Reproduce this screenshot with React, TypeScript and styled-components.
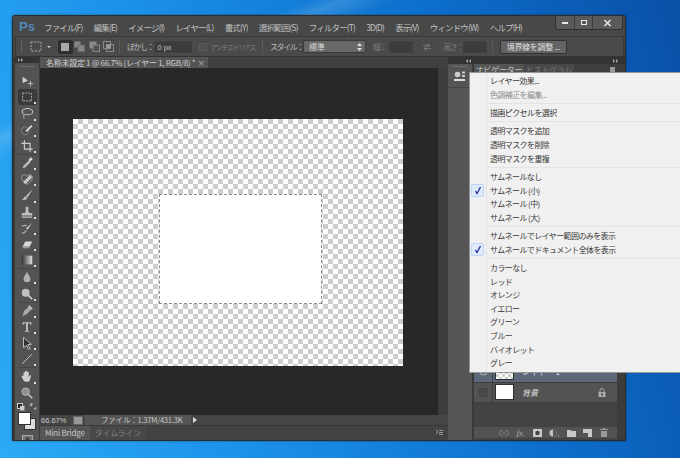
import React from "react";
import styled, { createGlobalStyle } from "styled-components";

const FONT = `"Noto Sans CJK JP", "Liberation Sans", sans-serif`;

const GlobalStyle = createGlobalStyle`
  html, body { margin: 0; padding: 0; height: 100%; overflow: hidden; }
  #root { height: 100%; }
  body { font-family: ${FONT}; }
`;

const MENUS = [
  "ファイル(F)", "編集(E)", "イメージ(I)", "レイヤー(L)", "書式(Y)", "選択範囲(S)",
  "フィルター(T)", "3D(D)", "表示(V)", "ウィンドウ(W)", "ヘルプ(H)",
];

// null は区切り線
const POPUP: ({ label: string; off?: boolean; checked?: boolean } | null)[] = [
  { label: "レイヤー効果..." },
  { label: "色調補正を編集...", off: true },
  null,
  { label: "描画ピクセルを選択" },
  null,
  { label: "透明マスクを追加" },
  { label: "透明マスクを削除" },
  { label: "透明マスクを重複" },
  null,
  { label: "サムネールなし" },
  { label: "サムネール (小)", checked: true },
  { label: "サムネール (中)" },
  { label: "サムネール (大)" },
  null,
  { label: "サムネールでレイヤー範囲のみを表示" },
  { label: "サムネールでドキュメント全体を表示", checked: true },
  null,
  { label: "カラーなし" },
  { label: "レッド" },
  { label: "オレンジ" },
  { label: "イエロー" },
  { label: "グリーン" },
  { label: "ブルー" },
  { label: "バイオレット" },
  { label: "グレー" },
];

const TOOLS: { key: string; active?: boolean; gap?: boolean; plain?: boolean; icon: React.ReactNode }[] = [
  { key: "move", plain: true, icon: <><path d="M3 3l6 4.5-6 3z" fill="#d0d0d0" /><path d="M12 8v6M9 11h6" stroke="#c4c4c4" /></> },
  { key: "marquee", active: true, icon: <rect x="3" y="3.5" width="10" height="9" fill="none" stroke="#ccc" strokeDasharray="2 1.3" /> },
  { key: "lasso", icon: <><ellipse cx="8.5" cy="6.5" rx="6" ry="3.6" fill="none" stroke="#c8c8c8" strokeWidth="1.2" /><path d="M4.5 9.5c-1 2 .5 3.5 0 5" fill="none" stroke="#c8c8c8" /></> },
  { key: "quick", icon: <><circle cx="6" cy="9" r="4.4" fill="none" stroke="#aaa" strokeDasharray="1.5 1" /><path d="M7 9.5L13.5 3" stroke="#ddd" strokeWidth="2" /></> },
  { key: "crop", gap: true, icon: <path d="M5 1.5V11.5H14.5M1.5 5H11.5V14.5" fill="none" stroke="#d0d0d0" strokeWidth="1.3" /> },
  { key: "eyedropper", icon: <><path d="M3 14l1-3 6-6 2 2-6 6z" fill="#bbb" /><path d="M9.5 4.5l3-3 2 2-3 3z" fill="#e0e0e0" /></> },
  { key: "heal", icon: <><path d="M8 14C3 11 1.5 8 2 5.5 2.500 3 6 2 8 5c2-3 5.500-2 6 .5.5 2.500-1 5.500-6 8.500z" fill="none" stroke="#aaa" /><path d="M3.500 11.500l8-8 2.500 2.500-8 8z" fill="#c8c8c8" /></> },
  { key: "brush", icon: <><path d="M14.500 1.500L7 9l1.500 1.500z" fill="#ddd" /><path d="M6.500 9.500c-2 .5-2 3-4.500 4 3 .8 6-.5 6.500-2.500z" fill="#bbb" /></> },
  { key: "stamp", icon: <path d="M6.500 2h3v5l1 2h3.500v3H2V9h3.500l1-2zM2 13h12v1.500H2z" fill="#c0c0c0" /> },
  { key: "history", icon: <><path d="M14 2L7 8.500l1.500 1.500z" fill="#ddd" /><path d="M2 6c3-1.500 5-1.500 6 0M2 14c2 0 4-.5 5-3.500" fill="none" stroke="#aaa" strokeWidth="1.400" /></> },
  { key: "eraser", icon: <><path d="M6 5h8l-3 6H3z" fill="#d8d8d8" /><path d="M3 11h8v2H3z" fill="#999" /></> },
  { key: "gradient", gap: true, icon: <><defs><linearGradient id="gr" x1="0" x2="1"><stop offset="0" stopColor="#333" /><stop offset="1" stopColor="#ddd" /></linearGradient></defs><rect x="2" y="3" width="12" height="10" fill="url(#gr)" /></> },
  { key: "blur", icon: <path d="M8 2c1 3 4 5 4 8a4 4 0 0 1-8 0c0-3 3-5 4-8z" fill="#b0b0b0" /> },
  { key: "dodge", gap: true, icon: <><circle cx="6.500" cy="6.500" r="4.500" fill="#c0c0c0" /><path d="M9.500 9.500l4.500 4.500" stroke="#ccc" strokeWidth="2" /></> },
  { key: "pen", icon: <><path d="M3 14l1.500-6L10 3l3 3-5 5.500z" fill="#aaa" /><path d="M10 2l4 4" stroke="#ddd" strokeWidth="1.500" /></> },
  { key: "type", icon: <path d="M3 2.500h10v3h-1c-.3-1-.6-1.700-2-1.700H9v8c0 .8.500 1 1.500 1v.7h-5v-.7c1 0 1.500-.2 1.500-1v-8H6c-1.400 0-1.700.7-2 1.700H3z" fill="#c4c4c4" /> },
  { key: "path", icon: <path d="M4 1.500l9 8-4 .4 2.500 4.500-2 .8-2-4.500L4 13z" fill="#333" stroke="#ccc" /> },
  { key: "line", gap: true, icon: <path d="M2.500 13.500l11-11" stroke="#c8c8c8" strokeWidth="1.100" /> },
  { key: "hand", icon: <path d="M4 8V4.500c0-1 1.300-1 1.500 0V7V3c0-1 1.500-1 1.500 0v4V2.800c0-1 1.500-1 1.500 0V7V4c0-1 1.500-1 1.500 0v5l1.300-1.500c.8-.8 1.800 0 1.200.9L11 13.500c-.6.9-1.500 1-2.500 1H7C5 14.500 4 13 3 11L1.800 8.500C1.500 7.500 2.700 7 3.200 7.800z" fill="#d0d0d0" /> },
  { key: "zoom", plain: true, icon: <><circle cx="6.500" cy="6.500" r="4.300" fill="#909090" stroke="#bbb" /><path d="M9.800 9.800l4.200 4.200" stroke="#bbb" strokeWidth="2" /></> },
];

export default function App() {
  return (
    <Desktop>
      <GlobalStyle />
      <Window>
        <MenuBar>
          <Logo>Ps</Logo>
          <MenuList>
            {MENUS.map((m) => <MenuItem key={m}>{m}</MenuItem>)}
          </MenuList>
          <Controls>
            <Control $w={18}><MinGlyph /></Control>
            <Control $w={17}><MaxGlyph /></Control>
            <Control $w={29}>
              <svg width="9" height="8" viewBox="0 0 9 8"><path d="M1.500 1l6 6M7.500 1l-6 6" stroke="#e8e8e8" strokeWidth="1.500" /></svg>
            </Control>
          </Controls>
        </MenuBar>

        <OptionsBar>
          <Grip />
          <OptIcon $w={20}>
            <svg width="12" height="11" viewBox="0 0 12 11"><rect x="1" y="1" width="10" height="9" fill="none" stroke="#aaa" strokeDasharray="2 1.300" /></svg>
          </OptIcon>
          <Caret />
          <ModeGroup>
            <ModeButton $on><svg width="8" height="8"><rect width="8" height="8" fill="#a8a8a8" /></svg></ModeButton>
            <ModeButton>
              <svg width="11" height="11"><rect x="0.500" y="0.500" width="6" height="6" fill="#888" /><rect x="4" y="4" width="6.500" height="6.500" fill="#888" stroke="#666" /></svg>
            </ModeButton>
            <ModeButton>
              <svg width="11" height="11"><rect x="0.500" y="0.500" width="7" height="7" fill="#888" /><rect x="4" y="4" width="6.500" height="6.500" fill="#505050" stroke="#888" /></svg>
            </ModeButton>
            <ModeButton>
              <svg width="11" height="11"><rect x="0.500" y="0.500" width="7" height="7" fill="none" stroke="#888" /><rect x="3.500" y="3.500" width="7" height="7" fill="none" stroke="#888" /><rect x="3.500" y="3.500" width="4" height="4" fill="#999" /></svg>
            </ModeButton>
          </ModeGroup>
          <OptSep $l={3} $r={7} />
          <OptLabel>ぼかし：</OptLabel>
          <TextField $w={38} $l={1}>0 px</TextField>
          <CheckBox />
          <OptLabel $dim $narrow>アンチエイリアス</OptLabel>
          <OptSep $l={7} $r={7} />
          <OptLabel>スタイル：</OptLabel>
          <SelectBox>
            標準
            <svg width="5" height="8" viewBox="0 0 5 8"><path d="M2.500 0L5 3H0zM2.500 8L0 5h5z" fill="#ddd" /></svg>
          </SelectBox>
          <OptLabel $dim $l={7}>幅：</OptLabel>
          <TextField $w={24} $l={3} />
          <OptIcon $w={28}>
            <svg width="10" height="10" viewBox="0 0 10 10"><path d="M1 3.500h6M5.500 1.500L8 3.500 5.500 5M9 6.500H3M4.500 4.500L2 6.500l2.500 2" fill="none" stroke="#777" /></svg>
          </OptIcon>
          <OptLabel $dim $l={2}>高さ：</OptLabel>
          <TextField $w={24} />
          <OptSep $l={5} $r={7} />
          <RefineButton>境界線を調整 ...</RefineButton>
        </OptionsBar>

        <Workspace>
          <ToolColumn>
            <ToolHead>
              <svg width="6" height="4" viewBox="0 0 6 4"><path d="M0 0l2 2-2 2zM3 0l2 2-2 2z" fill="#aaa" /></svg>
            </ToolHead>
            <ToolGrip />
            {TOOLS.map((t) => (
              <React.Fragment key={t.key}>
                <ToolButton $active={t.active}>
                  <svg width="14" height="14" viewBox="0 0 16 16">{t.icon}</svg>
                  {!t.plain && <CornerMark />}
                </ToolButton>
                {t.gap && <ToolSep />}
              </React.Fragment>
            ))}
            <SwapRow>
              <svg width="8" height="8"><rect x="0.500" y="0.500" width="5" height="5" fill="#222" stroke="#ccc" /><rect x="3" y="3" width="4.500" height="4.500" fill="#ccc" /></svg>
              <svg width="8" height="8" viewBox="0 0 8 8"><path d="M1 3c0-1.500 1-2 3-2M6 7c1-1 1-2 1-3M3 0L1 1.500 3 3M5 5l2 2" fill="none" stroke="#bbb" /></svg>
            </SwapRow>
            <Swatches>
              <BackSwatch />
              <FrontSwatch />
            </Swatches>
            <MaskButton>
              <svg width="11" height="8"><rect x="0.500" y="0.500" width="10" height="7" fill="#777" stroke="#aaa" /><circle cx="5.500" cy="4" r="2" fill="#444" /></svg>
            </MaskButton>
          </ToolColumn>

          <Center>
            <TabStrip>
              <DocTab>
                名称未設定 1 @ 66.7% (レイヤー 1, RGB/8) *
                <TabClose>×</TabClose>
              </DocTab>
            </TabStrip>
            <CanvasRow>
              <Canvas>
                <Sheet>
                  <Selection />
                </Sheet>
              </Canvas>
              <Scroller />
            </CanvasRow>
            <StatusBar>
              <Zoom>66.67%</Zoom>
              <StatusIcon />
              <FileInfo>ファイル：1.37M/431.3K</FileInfo>
              <StatusArrow />
            </StatusBar>
            <BottomTabs>
              <BottomTab $on>Mini Bridge</BottomTab>
              <BottomTab>タイムライン</BottomTab>
              <BottomMenu>
                <svg width="7" height="5" viewBox="0 0 7 5"><path d="M0 0l2 2-2 2M3 .5h4M3 2.500h4M3 4.500h4" fill="none" stroke="#999" /></svg>
              </BottomMenu>
            </BottomTabs>
          </Center>

          <Dock>
            <DockHead>
              <svg width="6" height="4" viewBox="0 0 6 4"><path d="M3 0L1 2l2 2zM6 0L4 2l2 2z" fill="#aaa" /></svg>
              <svg width="6" height="4" viewBox="0 0 6 4"><path d="M0 0l2 2-2 2zM3 0l2 2-2 2z" fill="#aaa" /></svg>
            </DockHead>
            <DockBody>
              <IconStrip>
                <StripGrip />
                <StripIcon>
                  <svg width="12" height="11" viewBox="0 0 12 11">
                    <circle cx="3.500" cy="3.500" r="2.800" fill="#ccc" />
                    <rect x="8" y="0.500" width="3" height="2" fill="#ccc" />
                    <rect x="8" y="4" width="3" height="2" fill="#ccc" />
                    <rect x="0" y="8" width="11" height="2" fill="#ddd" />
                  </svg>
                </StripIcon>
              </IconStrip>
              <LayersPanel>
                <PanelTabs>
                  <PanelTab $on>ナビゲーター</PanelTab>
                  <PanelTab>ヒストグラム</PanelTab>
                  <PanelMenu />
                </PanelTabs>
                <PanelSpace />
                <LayerRow $selected>
                  <EyeCell>
                    <svg width="9" height="9"><circle cx="4.500" cy="4.500" r="3.500" fill="none" stroke="#bbb" /></svg>
                  </EyeCell>
                  <LayerThumb $checker />
                  <LayerName>レイヤー 1</LayerName>
                </LayerRow>
                <LayerRow>
                  <EyeCell><EyeBox /></EyeCell>
                  <LayerThumb />
                  <LayerName $italic>背景</LayerName>
                  <LockIcon>
                    <svg width="8" height="9" viewBox="0 0 8 9"><path d="M2 4V2.500a2 2 0 0 1 4 0V4" fill="none" stroke="#aaa" /><rect x="0.500" y="4" width="7" height="5" fill="#aaa" /><rect x="3" y="5.500" width="2" height="2" fill="#555" /></svg>
                  </LockIcon>
                </LayerRow>
                <PanelRest />
                <PanelFooter>
                  <svg width="10" height="6" viewBox="0 0 10 6"><path d="M4 .7H2.500a2.300 2.300 0 0 0 0 4.600H4M6 .7h1.500a2.300 2.300 0 0 1 0 4.600H6M3 3h4" fill="none" stroke="#808080" /></svg>
                  <FxLabel>fx.</FxLabel>
                  <svg width="9" height="8"><rect width="9" height="8" fill="#c8c8c8" /><circle cx="4.500" cy="4" r="2.200" fill="#444" /></svg>
                  <svg width="10" height="8" viewBox="0 0 10 8"><circle cx="4" cy="4" r="3.600" fill="#c0c0c0" /><path d="M4 .4a3.600 3.600 0 0 1 0 7.200z" fill="#555" /><rect x="9" y="6.500" width="1" height="1" fill="#ccc" /></svg>
                  <svg width="9" height="8"><path d="M0 1h3.500l1 1H9v6H0z" fill="#c8c8c8" /></svg>
                  <svg width="9" height="8"><path d="M0 0h9v8H5V4H0z" fill="#c8c8c8" /></svg>
                  <svg width="8" height="9"><path d="M0 1h8v1H0zM1 3h6v6H1zM3 0h2v1H3z" fill="#999" /></svg>
                </PanelFooter>
              </LayersPanel>
              <PanelScroll />
            </DockBody>
          </Dock>
        </Workspace>
      </Window>

      <Popup>
        {POPUP.map((item, i) =>
          item === null ? (
            <PopupSep key={i} />
          ) : (
            <PopupItem key={i} $off={item.off}>
              {item.checked && (
                <CheckMark>
                  <svg width="8" height="9" viewBox="0 0 8 9"><path d="M1.500 5l1.500 2.500L6.500 1" fill="none" stroke="#1c2b9c" strokeWidth="1.300" /></svg>
                </CheckMark>
              )}
              {item.label}
            </PopupItem>
          )
        )}
      </Popup>
    </Desktop>
  );
}

const Desktop = styled.div`
  position: relative;
  width: 680px;
  height: 458px;
  overflow: hidden;
  background:
    linear-gradient(158deg, transparent 0 17%, rgba(255, 255, 255, 0.14) 19%, transparent 22%),
    linear-gradient(75deg, #2baaf5 0%, #1b90e8 32%, #0c6dca 70%, #0a4fa6 100%);
`;

const Window = styled.div`
  position: absolute;
  left: 12px;
  top: 15px;
  width: 614px;
  height: 426px;
  box-sizing: border-box;
  display: flex;
  flex-direction: column;
  background: #434343;
  border: 1px solid #2b2b2b;
  border-radius: 3px 3px 0 0;
  box-shadow: 0 0 2px rgba(0, 0, 0, 0.5);
`;

const MenuBar = styled.div`
  position: relative;
  height: 20px;
  display: flex;
  align-items: center;
  padding-left: 6px;
  background: #484848;
`;

const Logo = styled.div`
  width: 25px;
  font: bold 13px "Liberation Sans", sans-serif;
  color: #5288bd;
`;

const MenuList = styled.div`
  display: flex;
  gap: 11.1px;
  margin-top: 1px;
`;

const MenuItem = styled.span`
  font-size: 8.5px;
  letter-spacing: -0.85px;
  color: #c0c0c0;
  white-space: nowrap;
`;

const Controls = styled.div`
  position: absolute;
  right: 2px;
  top: 0;
  height: 13px;
  display: flex;
  border: 1px solid #2e2e2e;
  border-top: none;
  border-radius: 0 0 3px 3px;
  background: #5a5a5a;
`;

const Control = styled.div<{ $w: number }>`
  width: ${(p) => p.$w}px;
  display: flex;
  align-items: center;
  justify-content: center;
  border-right: 1px solid #3c3c3c;
  &:last-child { border-right: none; }
`;

const MinGlyph = styled.div`
  width: 6px;
  height: 2px;
  background: #e8e8e8;
`;

const MaxGlyph = styled.div`
  width: 4px;
  height: 3px;
  border: 1.5px solid #e8e8e8;
`;

const OptionsBar = styled.div`
  height: 21px;
  margin: 0 1px 0 2px;
  box-sizing: border-box;
  display: flex;
  align-items: center;
  padding-left: 5px;
  background: #4a4a4a;
  border: 1px solid #3a3a3a;
  border-bottom-color: #333;
`;

const Grip = styled.div`
  width: 1px;
  height: 12px;
  background: #666;
  margin-right: 4px;
`;

const OptIcon = styled.div<{ $w: number }>`
  width: ${(p) => p.$w}px;
  display: flex;
  justify-content: center;
  flex: none;
`;

const Caret = styled.div`
  width: 0;
  height: 0;
  margin: 0 7px 0 1px;
  border-left: 2px solid transparent;
  border-right: 2px solid transparent;
  border-top: 2.5px solid #ccc;
`;

const ModeGroup = styled.div`
  display: flex;
`;

const ModeButton = styled.div<{ $on?: boolean }>`
  width: 14.500px;
  height: 14px;
  display: flex;
  align-items: center;
  justify-content: center;
  border-radius: 2px;
  background: ${(p) => (p.$on ? "#2e2e2e" : "transparent")};
`;

const OptSep = styled.div<{ $l: number; $r: number }>`
  width: 1px;
  height: 14px;
  background: #5a5a5a;
  margin: 0 ${(p) => p.$r}px 0 ${(p) => p.$l}px;
  flex: none;
`;

const OptLabel = styled.span<{ $dim?: boolean; $l?: number; $narrow?: boolean }>`
  font-size: ${(p) => (p.$narrow ? 7 : 8)}px;
  letter-spacing: -1.4px;
  margin-left: ${(p) => p.$l ?? 0}px;
  color: ${(p) => (p.$dim ? "#7e7e7e" : "#bcbcbc")};
  white-space: nowrap;
`;

const TextField = styled.div<{ $w: number; $l?: number }>`
  width: ${(p) => p.$w}px;
  height: 12px;
  margin-left: ${(p) => p.$l ?? 0}px;
  box-sizing: border-box;
  padding-left: 2px;
  font: 7.5px/11px "Liberation Sans", sans-serif;
  color: #c0c0c0;
  background: #3c3c3c;
  border: 1px solid #404040;
  flex: none;
`;

const CheckBox = styled.div`
  width: 8px;
  height: 8px;
  box-sizing: border-box;
  margin: 0 3px 0 7px;
  background: #505050;
  border: 1px solid #5e5e5e;
  flex: none;
`;

const SelectBox = styled.div`
  width: 63px;
  height: 13px;
  box-sizing: border-box;
  padding: 0 3px 0 5px;
  display: flex;
  align-items: center;
  justify-content: space-between;
  font-size: 8px;
  color: #d8d8d8;
  background: #686868;
  border: 1px solid #3a3a3a;
  border-radius: 2px;
  flex: none;
`;

const RefineButton = styled.div`
  width: 65px;
  height: 12px;
  font-size: 8px;
  letter-spacing: -0.3px;
  line-height: 11px;
  text-align: center;
  color: #e0e0e0;
  background: #646464;
  border: 1px solid #333;
  border-radius: 2px;
  flex: none;
`;

const Workspace = styled.div`
  flex: 1;
  min-height: 0;
  display: flex;
  background: #3a3a3a;
`;

const ToolColumn = styled.div`
  width: 24px;
  margin-left: 2px;
  flex: none;
  display: flex;
  flex-direction: column;
  align-items: center;
  background: #535353;
  overflow: hidden;
`;

const ToolHead = styled.div`
  width: 100%;
  height: 6px;
  display: flex;
  align-items: center;
  padding-left: 3px;
  box-sizing: border-box;
  flex: none;
  background: #333;
`;

const ToolGrip = styled.div`
  width: 13px;
  height: 1px;
  margin: 3px 0 6px;
  flex: none;
  background: #6e6e6e;
`;

const ToolButton = styled.div<{ $active?: boolean }>`
  position: relative;
  width: 19px;
  height: 16.200px;
  flex: none;
  display: flex;
  align-items: center;
  justify-content: center;
  border-radius: 2px;
  background: ${(p) => (p.$active ? "#3a3a3a" : "transparent")};
`;

const CornerMark = styled.i`
  position: absolute;
  right: 1px;
  bottom: 1px;
  width: 2px;
  height: 2px;
  background: #ddd;
`;

const ToolSep = styled.div`
  width: 19px;
  height: 1px;
  flex: none;
  background: #454545;
`;

const SwapRow = styled.div`
  width: 20px;
  height: 9px;
  margin-top: 2px;
  flex: none;
  display: flex;
  justify-content: space-between;
`;

const Swatches = styled.div`
  position: relative;
  width: 18px;
  height: 18px;
  flex: none;
`;

const BackSwatch = styled.div`
  position: absolute;
  right: 0;
  bottom: 0;
  width: 10px;
  height: 10px;
  background: #dcdcdc;
  border: 1px solid #333;
`;

const FrontSwatch = styled.div`
  position: absolute;
  left: 0;
  top: 0;
  width: 11px;
  height: 11px;
  background: #fff;
  border: 1px solid #333;
`;

const MaskButton = styled.div`
  margin-top: 5px;
  flex: none;
  display: flex;
`;

const Center = styled.div`
  width: 408px;
  margin-left: 1px;
  flex: none;
  display: flex;
  flex-direction: column;
`;

const TabStrip = styled.div`
  height: 11px;
  flex: none;
  display: flex;
  align-items: flex-end;
  background: #404040;
`;

const DocTab = styled.div`
  width: 168px;
  height: 11px;
  box-sizing: border-box;
  padding-left: 6px;
  position: relative;
  font-size: 8px;
  line-height: 11px;
  letter-spacing: -0.28px;
  color: #cfcfcf;
  background: #555;
  white-space: nowrap;
`;

const TabClose = styled.span`
  position: absolute;
  right: 3px;
  top: 0;
  font-size: 8px;
  color: #bbb;
`;

const CanvasRow = styled.div`
  flex: 1;
  min-height: 0;
  display: flex;
`;

const Canvas = styled.div`
  flex: 1;
  box-sizing: border-box;
  padding: 51px 0 0 33px;
  background: #282828;
`;

const Sheet = styled.div`
  width: 330px;
  height: 247px;
  box-sizing: border-box;
  padding: 75px 0 0 86px;
  background-color: #fff;
  background-image: conic-gradient(#cdcdcd 25%, #fff 0 50%, #cdcdcd 0 75%, #fff 0);
  background-size: 10px 10px;
`;

const Selection = styled.div`
  width: 163px;
  height: 110px;
  box-sizing: border-box;
  background: #fff;
  border: 1px dashed #8a8a8a;
`;

const Scroller = styled.div`
  width: 10px;
  flex: none;
  background: #3d3d3d;
`;

const StatusBar = styled.div`
  height: 10px;
  flex: none;
  display: flex;
  align-items: center;
  background: #454545;
`;

const Zoom = styled.span`
  width: 32px;
  padding-left: 1px;
  font: 7.5px "Liberation Sans", sans-serif;
  color: #c8c8c8;
`;

const StatusIcon = styled.div`
  width: 8px;
  height: 7px;
  margin-right: 2px;
  background: #999;
  border: 1px solid #666;
`;

const FileInfo = styled.div`
  width: 106px;
  height: 100%;
  box-sizing: border-box;
  padding-left: 16px;
  font-size: 7.5px;
  line-height: 10px;
  letter-spacing: -0.2px;
  color: #c8c8c8;
  background: #555;
  white-space: nowrap;
`;

const StatusArrow = styled.div`
  width: 0;
  height: 0;
  margin-left: 2px;
  border-top: 3.5px solid transparent;
  border-bottom: 3.5px solid transparent;
  border-left: 4.500px solid #ddd;
`;

const BottomTabs = styled.div`
  height: 14px;
  flex: none;
  display: flex;
  align-items: stretch;
  margin-top: 1px;
  background: #434343;
`;

const BottomTab = styled.div<{ $on?: boolean }>`
  padding: 0 5px;
  font-size: 8px;
  line-height: 13px;
  letter-spacing: -0.2px;
  color: ${(p) => (p.$on ? "#c8c8c8" : "#808080")};
  background: ${(p) => (p.$on ? "#555" : "#484848")};
`;

const BottomMenu = styled.div`
  margin-left: auto;
  padding: 4px 5px 0 0;
  display: flex;
  align-items: flex-start;
`;

const Dock = styled.div`
  flex: 1;
  min-width: 0;
  display: flex;
  flex-direction: column;
`;

const DockHead = styled.div`
  height: 7px;
  flex: none;
  display: flex;
  align-items: center;
  justify-content: space-between;
  padding: 0 6px 0 17px;
  background: #333;
`;

const DockBody = styled.div`
  flex: 1;
  min-height: 0;
  display: flex;
`;

const IconStrip = styled.div`
  width: 24px;
  flex: none;
  display: flex;
  flex-direction: column;
  align-items: center;
  background: #555;
`;

const StripGrip = styled.div`
  width: 14px;
  height: 1px;
  margin-top: 2px;
  background: #707070;
`;

const StripIcon = styled.div`
  width: 100%;
  padding: 4px 0 5px;
  display: flex;
  justify-content: center;
  border-bottom: 1px solid #444;
`;

const LayersPanel = styled.div`
  width: 143px;
  margin-left: 2px;
  flex: none;
  display: flex;
  flex-direction: column;
  background: #434343;
`;

const PanelTabs = styled.div`
  height: 12px;
  flex: none;
  display: flex;
  background: #3e3e3e;
`;

const PanelTab = styled.div<{ $on?: boolean }>`
  width: 50px;
  font-size: 8px;
  line-height: 12px;
  text-align: center;
  letter-spacing: -0.3px;
  color: ${(p) => (p.$on ? "#c8c8c8" : "#777")};
  background: ${(p) => (p.$on ? "#555" : "#484848")};
`;

const PanelMenu = styled.div`
  width: 5px;
  height: 5px;
  margin: 3px 2px 0 auto;
  background: #999;
`;

const PanelSpace = styled.div`
  height: 286px;
  flex: none;
`;

const LayerRow = styled.div<{ $selected?: boolean }>`
  height: 20.500px;
  flex: none;
  display: flex;
  align-items: center;
  box-sizing: border-box;
  background: ${(p) => (p.$selected ? "#5c687a" : "#535353")};
  border-bottom: 1px solid #3e3e3e;
`;

const EyeCell = styled.div`
  width: 18px;
  height: 100%;
  flex: none;
  display: flex;
  align-items: center;
  justify-content: center;
  border-right: 1px solid #3e3e3e;
`;

const EyeBox = styled.div`
  width: 7px;
  height: 7px;
  background: #4a4a4a;
  border: 1px solid #444;
`;

const LayerThumb = styled.div<{ $checker?: boolean }>`
  width: 19px;
  height: 16px;
  margin: 0 8px 0 2px;
  flex: none;
  background-color: #fff;
  background-image: ${(p) =>
    p.$checker ? "conic-gradient(#ccc 25%, #fff 0 50%, #ccc 0 75%, #fff 0)" : "none"};
  background-size: 6px 6px;
  border: 1px solid #2e2e2e;
  box-sizing: border-box;
`;

const LayerName = styled.span<{ $italic?: boolean }>`
  font-size: 8px;
  font-style: ${(p) => (p.$italic ? "italic" : "normal")};
  color: #e4e4e4;
`;

const LockIcon = styled.div`
  margin-left: auto;
  margin-right: 11px;
  display: flex;
`;

const PanelRest = styled.div`
  flex: 1;
`;

const PanelFooter = styled.div`
  height: 11px;
  margin-bottom: 2px;
  flex: none;
  display: flex;
  align-items: center;
  justify-content: space-between;
  padding: 0 9px 0 25px;
  background: #535353;
  border-top: 1px solid #444;
`;

const FxLabel = styled.span`
  font: italic 9px "Liberation Serif", serif;
  color: #a8a8a8;
`;

const PanelScroll = styled.div`
  flex: 1;
  margin-bottom: 2px;
  background: #3c3c3c;
`;

const Popup = styled.div`
  position: absolute;
  left: 469px;
  top: 72px;
  width: 211px;
  height: 301px;
  box-sizing: border-box;
  padding: 1px 0 0 20px;
  background: linear-gradient(90deg, #f0f0f0 16px, #e2e3e3 16px 17px, #f0f0f0 17px);
  border-left: 1px solid #979797;
  border-top: 1px solid #979797;
  border-bottom: 1px solid #979797;
`;

const PopupItem = styled.div<{ $off?: boolean }>`
  position: relative;
  height: 13.600px;
  font-size: 8px;
  line-height: 13.600px;
  letter-spacing: -0.6px;
  color: ${(p) => (p.$off ? "#8d8d8d" : "#3a3a3a")};
  white-space: nowrap;
`;

const PopupSep = styled.div`
  height: 1px;
  margin: 1.900px 0 1.900px -2px;
  background: #e2e3e3;
`;

const CheckMark = styled.span`
  position: absolute;
  left: -19px;
  top: 0;
  width: 13px;
  height: 13px;
  box-sizing: border-box;
  display: flex;
  align-items: center;
  justify-content: center;
  background: #dfeafa;
  border: 1px solid #bcd5f2;
  border-radius: 2px;
`;
